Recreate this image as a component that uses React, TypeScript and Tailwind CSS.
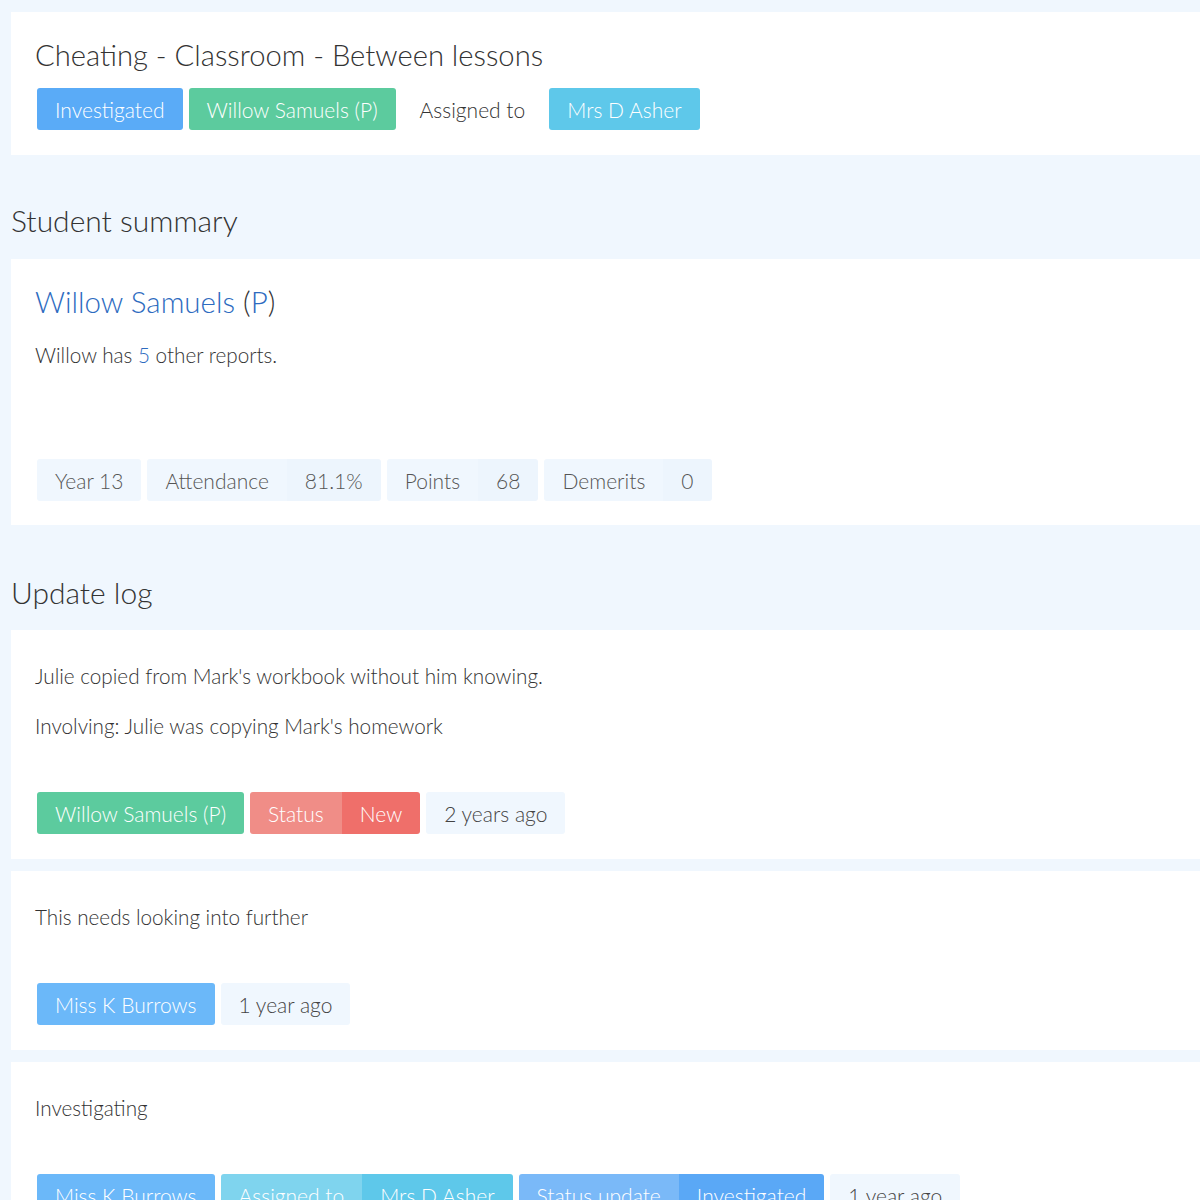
import React from 'react';

type Seg = { text: string; bg: string; fg?: string };

const Tag = ({ segs }: { segs: Seg[] }) => (
    <div className="flex h-[42px] rounded-[3px] overflow-hidden text-[21px] leading-none">
        {segs.map((s, i) => (
            <span key={i} className={`flex items-center px-[18px] ${s.bg} ${s.fg ?? 'text-white'}`}>
                {s.text}
            </span>
        ))}
    </div>
);

const TagRow = ({ children, className = '' }: { children: React.ReactNode; className?: string }) => (
    <div className={`flex gap-[6px] ml-[2px] ${className}`}>{children}</div>
);

const LogEntry = ({ lines, tags }: { lines: string[]; tags: Seg[][] }) => (
    <div className="bg-white pt-[34px] pb-[25px] px-[24px]">
        <div className="flex flex-col gap-[26px] text-[20.7px] leading-[24px] text-[#333]">
            {lines.map((l) => (
                <p key={l}>{l}</p>
            ))}
        </div>
        <TagRow className="mt-[54px]">
            {tags.map((t, i) => (
                <Tag key={i} segs={t} />
            ))}
        </TagRow>
    </div>
);

const timeTag = (t: string): Seg[] => [{ text: t, bg: 'bg-[#f0f7fe]', fg: 'text-[#444]' }];

export default function App() {
    return (
        <div
            className="min-h-screen bg-[#f0f7fe] pl-[11px] pt-[12px] pb-10 font-light"
            style={{ fontFamily: 'Lato, "Noto Sans", sans-serif' }}
        >
            {/* Header card */}
            <div className="bg-white pt-[26px] pb-[25px] px-[24px]">
                <h1 className="text-[29.2px] leading-[34px] text-[#333]">Cheating - Classroom - Between lessons</h1>
                <TagRow className="mt-[16px]">
                    <Tag segs={[{ text: 'Investigated', bg: 'bg-[#5aabf7]' }]} />
                    <Tag segs={[{ text: 'Willow Samuels (P)', bg: 'bg-[#5ccb9e]' }]} />
                    <Tag segs={[{ text: 'Assigned to', bg: 'bg-transparent', fg: 'text-[#333]' }]} />
                    <Tag segs={[{ text: 'Mrs D Asher', bg: 'bg-[#5ec8ea]' }]} />
                </TagRow>
            </div>

            {/* Student summary */}
            <h2 className="mt-[47px] mb-[21px] text-[30px] leading-[36px] text-[#333]">Student summary</h2>
            <div className="bg-white pt-[25px] pb-[24px] px-[24px]">
                <div className="text-[29.5px] leading-[36px] text-[#2d6bbf]">
                    Willow Samuels <span className="text-[#333]">(</span>P<span className="text-[#333]">)</span>
                </div>
                <p className="mt-[23px] text-[20.7px] leading-[24px] text-[#333]">
                    Willow has <span className="text-[#2d6bbf]">5</span> other reports.
                </p>
                <TagRow className="mt-[92px]">
                    <Tag segs={[{ text: 'Year 13', bg: 'bg-[#f0f7fe]', fg: 'text-[#555]' }]} />
                    <Tag
                        segs={[
                            { text: 'Attendance', bg: 'bg-[#f0f7fe]', fg: 'text-[#555]' },
                            { text: '81.1%', bg: 'bg-[#edf5fd]', fg: 'text-[#555]' },
                        ]}
                    />
                    <Tag
                        segs={[
                            { text: 'Points', bg: 'bg-[#f0f7fe]', fg: 'text-[#555]' },
                            { text: '68', bg: 'bg-[#edf5fd]', fg: 'text-[#555]' },
                        ]}
                    />
                    <Tag
                        segs={[
                            { text: 'Demerits', bg: 'bg-[#f0f7fe]', fg: 'text-[#555]' },
                            { text: '0', bg: 'bg-[#edf5fd]', fg: 'text-[#555]' },
                        ]}
                    />
                </TagRow>
            </div>

            {/* Update log */}
            <h2 className="mt-[49px] mb-[20px] text-[30px] leading-[36px] text-[#333]">Update log</h2>
            <div className="flex flex-col gap-[12px]">
                <LogEntry
                    lines={["Julie copied from Mark's workbook without him knowing.", "Involving: Julie was copying Mark's homework"]}
                    tags={[
                        [{ text: 'Willow Samuels (P)', bg: 'bg-[#5ccb9e]' }],
                        [
                            { text: 'Status', bg: 'bg-[#f08d87]' },
                            { text: 'New', bg: 'bg-[#ef6f6a]' },
                        ],
                        timeTag('2 years ago'),
                    ]}
                />
                <LogEntry
                    lines={['This needs looking into further']}
                    tags={[[{ text: 'Miss K Burrows', bg: 'bg-[#6bb8f9]' }], timeTag('1 year ago')]}
                />
                <LogEntry
                    lines={['Investigating']}
                    tags={[
                        [{ text: 'Miss K Burrows', bg: 'bg-[#6bb8f9]' }],
                        [
                            { text: 'Assigned to', bg: 'bg-[#7fd4ee]' },
                            { text: 'Mrs D Asher', bg: 'bg-[#5ec8ea]' },
                        ],
                        [
                            { text: 'Status update', bg: 'bg-[#7ab9f8]' },
                            { text: 'Investigated', bg: 'bg-[#5aa8f6]' },
                        ],
                        timeTag('1 year ago'),
                    ]}
                />
            </div>
        </div>
    );
}
